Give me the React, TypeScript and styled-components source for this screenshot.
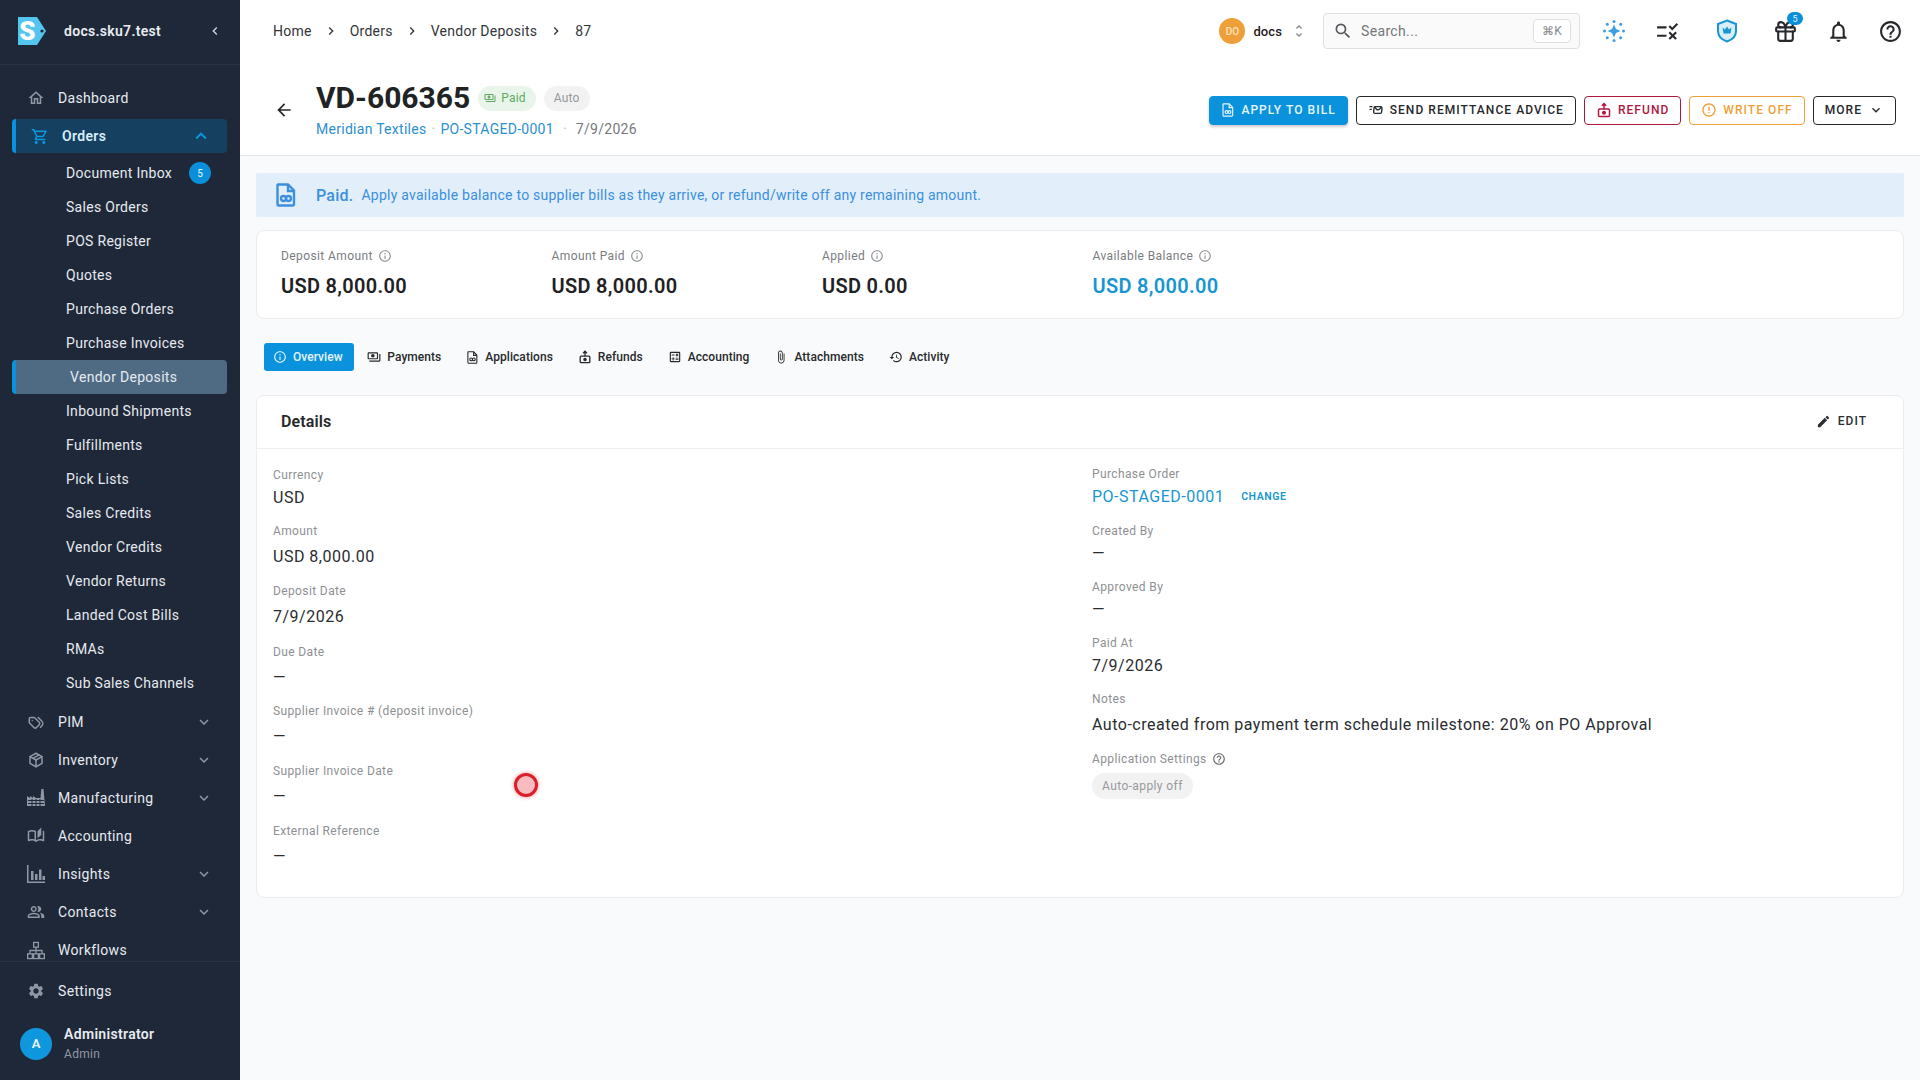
import React from 'react';
import styled, { createGlobalStyle } from 'styled-components';
import {
  MdOutlineHome, MdOutlineShoppingCart, MdExpandLess, MdExpandMore, MdOutlineAutoStories,
  MdOutlinePeopleAlt, MdSettings, MdChevronLeft, MdUnfoldMore, MdSearch, MdRule,
  MdOutlineNotifications, MdOutlineHelpOutline, MdArrowBack, MdOutlinePayments,
  MdInfoOutline, MdOutlineCalculate, MdOutlineAttachFile, MdHistory, MdEdit, MdErrorOutline, MdChevronRight,
} from 'react-icons/md';
import { TbTags, TbPackage, TbMailFast, TbGift } from 'react-icons/tb';

const Global = createGlobalStyle`
  html, body { margin: 0; padding: 0; background: #f9fafb; }
  body { font-family: Roboto, "Liberation Sans", sans-serif; color: #1f2021; }
  * { box-sizing: border-box; }
`;

const Shell = styled.div`
  position: relative;
  display: flex;
  width: 1920px;
  height: 1080px;
  overflow: hidden;
`;

const Sidebar = styled.aside`
  width: 240px;
  flex: none;
  display: flex;
  flex-direction: column;
  background: #1f2838;
  color: #e8ecf1;
`;
const Brand = styled.div`
  height: 65px;
  flex: none;
  display: flex;
  align-items: center;
  padding: 0 0 2px 18px;
  border-bottom: 1px solid #2b3444;
`;
const BrandName = styled.div`
  margin-left: 18px;
  flex: 1;
  font-size: 14px;
  font-weight: 600;
  letter-spacing: 0.3px;
`;
const Collapse = styled.span`
  display: flex;
  margin-right: 17px;
  font-size: 16px;
  color: #d5dae1;
`;
const Nav = styled.nav`
  flex: 1;
  min-height: 0;
  overflow: hidden;
  padding: 16px 13px 0 12px;
`;
const NavRow = styled.div<{ $active?: boolean }>`
  height: 34px;
  margin-bottom: 4px;
  display: flex;
  align-items: center;
  padding-left: 14px;
  padding-right: 14px;
  font-size: 14px;
  letter-spacing: 0.33px;
  border-radius: 4px;
  background: ${p => (p.$active ? '#15405f' : 'transparent')};
  border-left: ${p => (p.$active ? '4px solid #0a93dc' : '0')};
  font-weight: ${p => (p.$active ? 600 : 400)};
  color: ${p => (p.$active ? '#d8eefb' : '#e6eaf0')};
`;
const NavIcon = styled.span<{ $active?: boolean }>`
  width: 18px;
  height: 20px;
  margin: 0 13px 0 1px;
  display: flex;
  align-items: center;
  justify-content: center;
  font-size: ${p => (p.$active ? '23px' : '22px')};
  flex: none;
  color: ${p => (p.$active ? '#0d97de' : '#8f97a5')};
`;
const NavLabel = styled.span`
  flex: 1;
`;
const Caret = styled.span<{ $active?: boolean }>`
  display: flex;
  font-size: ${p => (p.$active ? '22px' : '18px')};
  margin-right: ${p => (p.$active ? '1px' : '0')};
  color: ${p => (p.$active ? '#0d97de' : '#8f97a5')};
`;
const SubList = styled.div`
  margin: -1px 0 5px;
`;
const SubRow = styled.div<{ $active?: boolean }>`
  height: 34px;
  display: flex;
  align-items: center;
  padding-left: 54px;
  font-size: 14px;
  letter-spacing: 0.3px;
  border-radius: 4px;
  color: #e6eaf0;
  background: ${p => (p.$active ? '#4f6b84' : 'transparent')};
  border-left: ${p => (p.$active ? '4px solid #0a93dc' : '0')};
`;
const Badge = styled.span`
  width: 22px;
  height: 22px;
  margin-left: 17px;
  display: flex;
  align-items: center;
  justify-content: center;
  border-radius: 50%;
  font-size: 10px;
  background: #0a8fdb;
  color: #e8f5fd;
`;
const SideFoot = styled.div`
  flex: none;
  height: 119px;
  border-top: 1px solid #2b3444;
  padding: 12px 12px 0;
`;
const UserRow = styled.div`
  display: flex;
  align-items: center;
  margin: 17px 0 0 8px;
`;
const Avatar = styled.div`
  width: 32px;
  height: 32px;
  border-radius: 50%;
  background: #0f97dd;
  color: #e9f6fd;
  font-size: 13px;
  font-weight: 600;
  display: flex;
  align-items: center;
  justify-content: center;
`;
const UserText = styled.div`
  margin-left: 12px;
`;
const UserName = styled.div`
  font-size: 14px;
  font-weight: 600;
  letter-spacing: 0.33px;
  line-height: 18px;
`;
const UserRole = styled.div`
  margin-top: 3px;
  font-size: 12px;
  letter-spacing: 0.3px;
  line-height: 16px;
  color: #8f97a5;
`;

const Main = styled.main`
  flex: 1;
  min-width: 0;
  display: flex;
  flex-direction: column;
`;
const TopBar = styled.div`
  height: 64px;
  flex: none;
  background: #fff;
  display: flex;
  align-items: center;
  padding: 0 4px 2px 33px;
`;
const Crumbs = styled.div`
  flex: 1;
  display: flex;
  align-items: center;
  font-size: 14px;
  letter-spacing: 0.25px;
  color: #33363a;
`;
const CrumbSep = styled.span`
  display: flex;
  margin: 0 11px;
  font-size: 16px;
`;
const OrgAvatar = styled.div`
  width: 26px;
  height: 26px;
  border-radius: 50%;
  background: #ef9f37;
  color: #fbe3c4;
  font-size: 10px;
  font-weight: 500;
  display: flex;
  align-items: center;
  justify-content: center;
`;
const OrgName = styled.span`
  margin-left: 8px;
  font-size: 13px;
  font-weight: 500;
  letter-spacing: 0.1px;
`;
const OrgSwitch = styled.span`
  display: flex;
  margin: 0 16px 0 9px;
  font-size: 16px;
  color: #8a8d91;
`;
const Search = styled.div`
  width: 257px;
  height: 36px;
  display: flex;
  align-items: center;
  padding: 0 8px 0 9px;
  background: #fafafa;
  border: 1px solid #dfe0e2;
  border-radius: 4px;
  font-size: 14px;
  letter-spacing: 0.35px;
  color: #74777b;
`;
const SearchIcon = styled.span`
  display: flex;
  font-size: 20px;
  margin-right: 8px;
  color: #55585c;
`;
const SearchText = styled.span`
  flex: 1;
`;
const Kbd = styled.span`
  height: 24px;
  width: 38px;
  display: flex;
  align-items: center;
  justify-content: center;
  background: #fff;
  border: 1px solid #dfe0e2;
  border-radius: 4px;
  font-size: 12px;
  color: #85888c;
`;
const TopIcons = styled.div`
  display: flex;
  align-items: center;
  margin-left: 10px;
`;
const TopIcon = styled.span<{ $w: number }>`
  position: relative;
  width: ${p => p.$w}px;
  height: 26px;
  display: flex;
  align-items: center;
  justify-content: center;
  font-size: 25px;
  color: #26282b;
`;
const CountDot = styled.span`
  position: absolute;
  top: -6px;
  right: 9px;
  width: 16px;
  height: 13px;
  border-radius: 7px;
  background: #0a8fdb;
  color: #e8f5fd;
  font-size: 9px;
  display: flex;
  align-items: center;
  justify-content: center;
`;
const PageHead = styled.header`
  height: 92px;
  flex: none;
  background: #fff;
  border-bottom: 1px solid #e2e3e5;
  display: flex;
  align-items: center;
  padding: 1px 24px 0 34px;
`;
const Back = styled.span`
  display: flex;
  width: 42px;
  font-size: 20px;
  color: #26282b;
`;
const HeadText = styled.div`
  flex: 1;
`;
const TitleRow = styled.div`
  display: flex;
  align-items: center;
  height: 40px;
  margin-top: -3px;
`;
const Title = styled.h1`
  margin: 0 8px 0 0;
  font-size: 30px;
  font-weight: 700;
  line-height: 40px;
  color: #202224;
`;
const Chip = styled.span<{ $green?: boolean }>`
  height: 25px;
  margin-right: 8px;
  padding: 0 10px 0 ${p => (p.$green ? '6px' : '10px')};
  display: flex;
  align-items: center;
  gap: 5px;
  border-radius: 13px;
  font-size: 12px;
  letter-spacing: 0.2px;
  background: ${p => (p.$green ? '#e9f5ea' : '#f2f2f3')};
  color: ${p => (p.$green ? '#5eaa63' : '#96989b')};
`;
const SubLine = styled.div`
  display: flex;
  align-items: center;
  height: 20px;
  margin-top: 1px;
  font-size: 14px;
  letter-spacing: 0.28px;
  color: #77797c;
`;
const LinkText = styled.span`
  color: #2c8fd0;
`;
const Dot = styled.span<{ $m: number }>`
  margin: 0 ${p => p.$m}px;
  color: #b6b8bb;
`;
const Actions = styled.div`
  display: flex;
  align-items: center;
  gap: 8px;
`;
const ActionBtn = styled.button<{ $c: string; $fill?: boolean }>`
  height: 29px;
  display: flex;
  align-items: center;
  gap: 6px;
  padding: 0 11px;
  border-radius: 4px;
  border: 1px solid ${p => (p.$fill ? '#0a93dc' : p.$c)};
  background: ${p => (p.$fill ? '#0a93dc' : '#fff')};
  color: ${p => p.$c};
  font-family: inherit;
  font-size: 12px;
  font-weight: 500;
  letter-spacing: 1.05px;
  white-space: nowrap;
  box-shadow: ${p => (p.$fill ? '0 2px 3px rgba(0,0,0,.2)' : 'none')};
  svg { font-size: 16px; flex: none; }
`;
const Content = styled.div`
  flex: 1;
  min-height: 0;
  padding: 17px 16px 0;
  display: flex;
  flex-direction: column;
`;
const Banner = styled.div`
  height: 44px;
  flex: none;
  display: flex;
  align-items: center;
  padding-left: 18px;
  background: #e2eefa;
  border-radius: 2px;
  color: #3b90dd;
  font-size: 14px;
  letter-spacing: 0.24px;
`;
const BannerIcon = styled.span`
  display: flex;
  margin-right: 18px;
`;
const BannerStrong = styled.strong`
  font-size: 16px;
  font-weight: 500;
  margin-right: 8px;
`;
const Stats = styled.section`
  height: 89px;
  flex: none;
  margin-top: 13px;
  padding: 15px 0 0 24px;
  display: grid;
  grid-template-columns: repeat(4, 270.5px);
  background: #fff;
  border: 1px solid #ececee;
  border-radius: 8px;
`;
const StatLabel = styled.div`
  display: flex;
  align-items: center;
  gap: 5px;
  height: 20px;
  font-size: 12px;
  letter-spacing: 0.4px;
  color: #7a7c80;
  svg { font-size: 14px; color: #8f9195; }
`;
const StatValue = styled.div<{ $blue?: boolean }>`
  margin-top: 8px;
  font-size: 20px;
  font-weight: 600;
  letter-spacing: 0.3px;
  line-height: 24px;
  color: ${p => (p.$blue ? '#1896d2' : '#1f2124')};
`;
const Tabs = styled.div`
  height: 30px;
  flex: none;
  margin: 23px 0 0 8px;
  display: flex;
  align-items: center;
  gap: 9px;
`;
const Tab = styled.div<{ $on?: boolean }>`
  height: ${p => (p.$on ? '28px' : '30px')};
  display: flex;
  align-items: center;
  gap: 6px;
  padding: 0 ${p => (p.$on ? '11px' : '2px')} 0 ${p => (p.$on ? '9px' : '2px')};
  margin-right: ${p => (p.$on ? '2.7px' : '12px')};
  border-radius: 3px;
  font-size: 12px;
  font-weight: 500;
  letter-spacing: 0.05px;
  background: ${p => (p.$on ? '#0a93dc' : 'transparent')};
  color: ${p => (p.$on ? '#e3f3fc' : '#27292c')};
  svg { font-size: 14px; }
`;
const Card = styled.section`
  height: 503px;
  flex: none;
  margin-top: 23px;
  background: #fff;
  border: 1px solid #ececee;
  border-radius: 8px;
`;
const CardHead = styled.div`
  height: 53px;
  display: flex;
  align-items: center;
  justify-content: space-between;
  padding: 0 36px 2px 24px;
  border-bottom: 1px solid #efeff1;
`;
const CardTitle = styled.h2`
  margin: 0;
  font-size: 16px;
  font-weight: 600;
  letter-spacing: 0.1px;
  color: #26282b;
`;
const EditBtn = styled.span`
  display: flex;
  align-items: center;
  gap: 7px;
  font-size: 12px;
  font-weight: 500;
  letter-spacing: 1px;
  color: #2c2e31;
  svg { font-size: 15px; }
`;
const Columns = styled.div`
  display: grid;
  grid-template-columns: 819px 1fr;
  padding: 17px 0 0 16px;
`;
const LeftColumn = styled.div`
  margin-top: 1px;
`;
const Field = styled.div<{ $h: number }>`
  height: ${p => p.$h}px;
`;
const FieldLabel = styled.div`
  display: flex;
  align-items: center;
  gap: 5px;
  height: 16px;
  font-size: 12px;
  letter-spacing: 0.38px;
  color: #8e9093;
  svg { font-size: 14px; color: #66686c; }
`;
const FieldValue = styled.div<{ $tight?: boolean; $link?: boolean }>`
  display: flex;
  align-items: center;
  margin-top: ${p => (p.$tight ? '2px' : '5px')};
  height: 24px;
  font-size: 16px;
  letter-spacing: 0.5px;
  color: ${p => (p.$link ? '#1896d2' : '#2a2c2f')};
`;
const ChangeLink = styled.span`
  margin-left: 17px;
  font-size: 10.5px;
  font-weight: 600;
  letter-spacing: 0.55px;
  color: #1896d2;
`;
const AutoChip = styled.span`
  display: inline-flex;
  align-items: center;
  height: 26px;
  margin-top: 6px;
  padding: 0 10px;
  border-radius: 13px;
  background: #f2f2f3;
  font-size: 12px;
  letter-spacing: 0.4px;
  color: #98999c;
`;
const ClickMark = styled.div`
  position: absolute;
  left: 514px;
  top: 773px;
  width: 24px;
  height: 24px;
  border-radius: 50%;
  background: #f8bcc0;
  border: 3px solid #d81f2a;
  box-shadow: 0 0 4px rgba(220, 40, 50, .5);
`;

const Logo = () => (
  <svg width="28" height="28" viewBox="0 0 28 28">
    <path d="M0 0h19l9 14-9 14H0z" fill="#54c5ef" />
    <circle cx="24" cy="14" r="1.6" fill="#1f2838" />
    <text x="9.5" y="23" textAnchor="middle" fontFamily="Roboto" fontWeight="900" fontSize="26" fill="#fff">S</text>
  </svg>
);
const FileLink = ({ size = 16, color = 'currentColor', weight = 2 }: { size?: number; color?: string; weight?: number }) => (
  <svg width={size} height={size} viewBox="0 0 20 24" fill="none" stroke={color} strokeWidth={weight}>
    <path d="M2 1.5h10l6 6V21a1.5 1.5 0 0 1-1.5 1.5h-14A1.5 1.5 0 0 1 1.500 21V2z" />
    <path d="M12 1.500V8h6" />
    <circle cx="7.500" cy="15.500" r="2.500" />
    <circle cx="12.500" cy="15.500" r="2.500" />
  </svg>
);
const RefundIcon = ({ size = 16 }: { size?: number }) => (
  <svg width={size} height={size} viewBox="0 0 16 16" fill="none" stroke="currentColor" strokeWidth="1.500">
    <rect x="2.500" y="7" width="11" height="7.500" rx="1" />
    <circle cx="8" cy="10.800" r="1.300" fill="currentColor" />
    <path d="M8 7V1.800M5.800 3.800 8 1.500l2.200 2.300" />
  </svg>
);
const Sparkle = () => (
  <svg width="22" height="22" viewBox="0 0 22 22" fill="#3d9fe0">
    <path d="M11 4.500 13 9 17.500 11 13 13 11 17.500 9 13 4.500 11 9 9z" />
    {[[11, 1.500], [11, 20.500], [1.500, 11], [20.500, 11], [4.300, 4.300], [17.700, 4.300], [4.300, 17.700], [17.700, 17.700]].map(([x, y], i) => (
      <circle key={i} cx={x} cy={y} r={1.500} />
    ))}
  </svg>
);
const Shield = () => (
  <svg width="22" height="24" viewBox="0 0 22 24" fill="none">
    <path d="M11 1.500 20 5v7c0 5-4 8.800-9 10.500C6 20.800 2 17 2 12V5z" stroke="#1896d2" strokeWidth="2" fill="#d9eef9" />
    <path d="M6.500 8.500 9 10.500 11 7.500l2 3 2.500-2-1 6h-7z" fill="#1896d2" />
  </svg>
);
const Factory = () => (
  <svg width="18" height="18" viewBox="0 0 18 18" fill="currentColor">
    <path d="M0 17V7l3 2V7l3 2V7l3 2h4.500l.8-9H16.500l1.500 17z" />
    <path d="M1 11.500h16M1 14.500h16M5 10v7M9 10v7M13 10v7" stroke="#1f2838" strokeWidth="1" />
  </svg>
);
const Bars = () => (
  <svg width="18" height="18" viewBox="0 0 18 18" fill="currentColor">
    <path d="M0 0h1.500v16.500H18V18H0z" />
    <path d="M4 6h2.500v9H4zM8 9h2.500v6H8zM12 4.500h2.500V15H12zM15.500 11H18v4h-2.500z" />
  </svg>
);
const Tree = () => (
  <svg width="19" height="19" viewBox="0 0 19 19" fill="none" stroke="currentColor" strokeWidth="1.400">
    <rect x="7" y="1" width="5" height="5" />
    <rect x=".7" y="13" width="5" height="5" />
    <rect x="7" y="13" width="5" height="5" />
    <rect x="13.300" y="13" width="5" height="5" />
    <path d="M9.500 6v7M3.200 13V9.500h12.600V13" />
  </svg>
);

const subs = ['Sales Orders', 'POS Register', 'Quotes', 'Purchase Orders', 'Purchase Invoices'];
const subs2 = ['Inbound Shipments', 'Fulfillments', 'Pick Lists', 'Sales Credits', 'Vendor Credits', 'Vendor Returns', 'Landed Cost Bills', 'RMAs', 'Sub Sales Channels'];
const lower: [string, React.ReactNode, boolean][] = [
  ['PIM', <TbTags />, true],
  ['Inventory', <TbPackage />, true],
  ['Manufacturing', <Factory />, true],
  ['Accounting', <MdOutlineAutoStories />, false],
  ['Insights', <Bars />, true],
  ['Contacts', <MdOutlinePeopleAlt />, true],
  ['Workflows', <Tree />, false],
];
const stats = [
  ['Deposit Amount', 'USD 8,000.00'],
  ['Amount Paid', 'USD 8,000.00'],
  ['Applied', 'USD 0.00'],
  ['Available Balance', 'USD 8,000.00'],
];
const tabs: [string, React.ReactNode][] = [
  ['Payments', <MdOutlinePayments />],
  ['Applications', <FileLink size={13} />],
  ['Refunds', <RefundIcon size={14} />],
  ['Accounting', <MdOutlineCalculate />],
  ['Attachments', <MdOutlineAttachFile />],
  ['Activity', <MdHistory />],
];
const left: [string, string, number, boolean][] = [
  ['Currency', 'USD', 56, true],
  ['Amount', 'USD 8,000.00', 60, false],
  ['Deposit Date', '7/9/2026', 61, false],
  ['Due Date', '—', 59, false],
  ['Supplier Invoice # (deposit invoice)', '—', 60, false],
  ['Supplier Invoice Date', '—', 60, false],
  ['External Reference', '—', 60, false],
];
const right: [string, string, number, boolean][] = [
  ['Created By', '—', 56, true],
  ['Approved By', '—', 56, true],
  ['Paid At', '7/9/2026', 56, true],
  ['Notes', 'Auto-created from payment term schedule milestone: 20% on PO Approval', 60, false],
];

export default function App() {
  return (
    <Shell>
      <Global />
      <Sidebar>
        <Brand>
          <Logo />
          <BrandName>docs.sku7.test</BrandName>
          <Collapse><MdChevronLeft /></Collapse>
        </Brand>
        <Nav>
          <NavRow>
            <NavIcon><MdOutlineHome /></NavIcon>
            <NavLabel>Dashboard</NavLabel>
          </NavRow>
          <NavRow $active>
            <NavIcon $active><MdOutlineShoppingCart /></NavIcon>
            <NavLabel>Orders</NavLabel>
            <Caret $active><MdExpandLess /></Caret>
          </NavRow>
          <SubList>
            <SubRow>Document Inbox<Badge>5</Badge></SubRow>
            {subs.map(s => <SubRow key={s}>{s}</SubRow>)}
            <SubRow $active>Vendor Deposits</SubRow>
            {subs2.map(s => <SubRow key={s}>{s}</SubRow>)}
          </SubList>
          {lower.map(([label, icon, caret]) => (
            <NavRow key={label}>
              <NavIcon>{icon}</NavIcon>
              <NavLabel>{label}</NavLabel>
              {caret && <Caret><MdExpandMore /></Caret>}
            </NavRow>
          ))}
        </Nav>
        <SideFoot>
          <NavRow>
            <NavIcon><MdSettings /></NavIcon>
            <NavLabel>Settings</NavLabel>
          </NavRow>
          <UserRow>
            <Avatar>A</Avatar>
            <UserText>
              <UserName>Administrator</UserName>
              <UserRole>Admin</UserRole>
            </UserText>
          </UserRow>
        </SideFoot>
      </Sidebar>
      <Main>
        <TopBar>
          <Crumbs>
            Home<CrumbSep><MdChevronRight /></CrumbSep>
            Orders<CrumbSep><MdChevronRight /></CrumbSep>
            Vendor Deposits<CrumbSep><MdChevronRight /></CrumbSep>
            87
          </Crumbs>
          <OrgAvatar>DO</OrgAvatar>
          <OrgName>docs</OrgName>
          <OrgSwitch><MdUnfoldMore /></OrgSwitch>
          <Search>
            <SearchIcon><MdSearch /></SearchIcon>
            <SearchText>Search...</SearchText>
            <Kbd>⌘K</Kbd>
          </Search>
          <TopIcons>
            <TopIcon $w={48}><Sparkle /></TopIcon>
            <TopIcon $w={58}><MdRule /></TopIcon>
            <TopIcon $w={62}><Shield /></TopIcon>
            <TopIcon $w={54}><TbGift /><CountDot>5</CountDot></TopIcon>
            <TopIcon $w={52}><MdOutlineNotifications /></TopIcon>
            <TopIcon $w={52}><MdOutlineHelpOutline /></TopIcon>
          </TopIcons>
        </TopBar>
        <PageHead>
          <Back><MdArrowBack /></Back>
          <HeadText>
            <TitleRow>
              <Title>VD-606365</Title>
              <Chip $green><MdOutlinePayments />Paid</Chip>
              <Chip>Auto</Chip>
            </TitleRow>
            <SubLine>
              <LinkText>Meridian Textiles</LinkText><Dot $m={5}>·</Dot>
              <LinkText>PO-STAGED-0001</LinkText><Dot $m={9}>·</Dot>
              7/9/2026
            </SubLine>
          </HeadText>
          <Actions>
            <ActionBtn $c="#e6f5fd" $fill><FileLink size={14} />APPLY TO BILL</ActionBtn>
            <ActionBtn $c="#26282b"><TbMailFast />SEND REMITTANCE ADVICE</ActionBtn>
            <ActionBtn $c="#b0173f"><RefundIcon />REFUND</ActionBtn>
            <ActionBtn $c="#ef9f37"><MdErrorOutline />WRITE OFF</ActionBtn>
            <ActionBtn $c="#26282b">MORE<MdExpandMore /></ActionBtn>
          </Actions>
        </PageHead>
        <Content>
          <Banner>
            <BannerIcon><FileLink size={24} weight={2.4} /></BannerIcon>
            <BannerStrong>Paid.</BannerStrong>
            Apply available balance to supplier bills as they arrive, or refund/write off any remaining amount.
          </Banner>
          <Stats>
            {stats.map(([l, v], i) => (
              <div key={l}>
                <StatLabel>{l}<MdInfoOutline /></StatLabel>
                <StatValue $blue={i === 3}>{v}</StatValue>
              </div>
            ))}
          </Stats>
          <Tabs>
            <Tab $on><MdInfoOutline />Overview</Tab>
            {tabs.map(([l, ic]) => <Tab key={l}>{ic}{l}</Tab>)}
          </Tabs>
          <Card>
            <CardHead>
              <CardTitle>Details</CardTitle>
              <EditBtn><MdEdit />EDIT</EditBtn>
            </CardHead>
            <Columns>
              <LeftColumn>
                {left.map(([l, v, h, t]) => (
                  <Field key={l} $h={h}>
                    <FieldLabel>{l}</FieldLabel>
                    <FieldValue $tight={t}>{v}</FieldValue>
                  </Field>
                ))}
              </LeftColumn>
              <div>
                <Field $h={57}>
                  <FieldLabel>Purchase Order</FieldLabel>
                  <FieldValue $tight $link>PO-STAGED-0001<ChangeLink>CHANGE</ChangeLink></FieldValue>
                </Field>
                {right.map(([l, v, h, t]) => (
                  <Field key={l} $h={h}>
                    <FieldLabel>{l}</FieldLabel>
                    <FieldValue $tight={t}>{v}</FieldValue>
                  </Field>
                ))}
                <Field $h={60}>
                  <FieldLabel>Application Settings<MdOutlineHelpOutline /></FieldLabel>
                  <AutoChip>Auto-apply off</AutoChip>
                </Field>
              </div>
            </Columns>
          </Card>
        </Content>
      </Main>
      <ClickMark />
    </Shell>
  );
}
